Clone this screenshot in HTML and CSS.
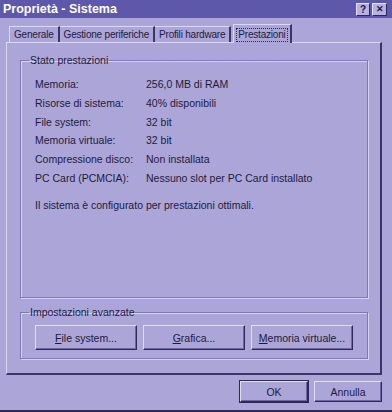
FILE: index.html
```html
<!DOCTYPE html>
<html lang="it">
<head>
<meta charset="UTF-8">
<title>Proprietà - Sistema</title>
<link rel="stylesheet" href="styles.css">
</head>
<body>
<div class="window">
    <div class="titlebar">
        <span class="title">Proprietà - Sistema</span>
        <span class="tbtn">?</span>
        <span class="tbtn x">&#x2715;</span>
    </div>
    <div class="tabs">
        <div class="tab first">Generale</div>
        <div class="tab">Gestione periferiche</div>
        <div class="tab">Profili hardware</div>
        <div class="tab active"><span class="focus">Prestazioni</span></div>
    </div>
    <div class="panel">
        <fieldset class="group stato">
            <legend>Stato prestazioni</legend>
            <div class="row"><span class="lbl">Memoria:</span><span>256,0 MB di RAM</span></div>
            <div class="row"><span class="lbl">Risorse di sistema:</span><span>40% disponibili</span></div>
            <div class="row"><span class="lbl">File system:</span><span>32 bit</span></div>
            <div class="row"><span class="lbl">Memoria virtuale:</span><span>32 bit</span></div>
            <div class="row"><span class="lbl">Compressione disco:</span><span>Non installata</span></div>
            <div class="row"><span class="lbl">PC Card (PCMCIA):</span><span>Nessuno slot per PC Card installato</span></div>
            <p class="msg">Il sistema è configurato per prestazioni ottimali.</p>
        </fieldset>
        <fieldset class="group avanzate">
            <legend>Impostazioni avanzate</legend>
            <div class="btnrow">
                <button class="btn"><u>F</u>ile system...</button>
                <button class="btn"><u>G</u>rafica...</button>
                <button class="btn"><u>M</u>emoria virtuale...</button>
            </div>
        </fieldset>
    </div>
    <div class="footer">
        <button class="btn ok">OK</button>
        <button class="btn">Annulla</button>
    </div>
</div>
</body>
</html>
```
FILE: styles.css
```css
body{
    margin: 0;
}
body *{
    font-family: "Liberation Sans", Arial, sans-serif;
}
.window{
    width: 392px;
    height: 412px;
    box-sizing: border-box;
    background-color: #aca6d8;
    border-bottom: 2px solid #2c2a55;
    color: #1c1a3c;
    font-size: 10.5px;
}
.titlebar{
    height: 18px;
    background-color: #5d58a9;
    display: flex;
    align-items: center;
    padding: 0 5px 0 3px;
    gap: 2px;
}
.title{
    flex: 1;
    color: white;
    font-weight: bold;
    font-size: 12.5px;
}
.tbtn{
    width: 14px;
    height: 13px;
    box-sizing: border-box;
    background-color: #b7b1e0;
    border: 1px solid;
    border-color: #e4e1f6 #2c2a55 #2c2a55 #e4e1f6;
    font-weight: bold;
    font-size: 10px;
    line-height: 11px;
    text-align: center;
    color: #1c1a3c;
}
.tbtn.x{
    width: 15px;
    font-size: 9px;
}
.tabs{
    display: flex;
    align-items: flex-end;
    height: 19px;
    margin-top: 5px;
    padding-left: 9px;
}
.tab{
    height: 16px;
    line-height: 15px;
    padding: 0 4px;
    font-size: 10px;
    letter-spacing: -0.2px;
    border-top: 1px solid #dcd8f3;
    border-right: 2px solid #3a3768;
    box-sizing: border-box;
}
.tab.first{
    border-left: 1px solid #dcd8f3;
}
.tab.active{
    height: 19px;
    margin-left: 2px;
    padding: 2px 2px 0 2px;
    border-left: 1px solid #dcd8f3;
    position: relative;
    top: 1px;
    background-color: #aca6d8;
}
.tab.active .focus{
    border: 1px dotted #2c2a55;
    padding: 0 1px;
    line-height: 12px;
    display: inline-block;
}
.panel{
    margin: 0 10px 0 6px;
    height: 333px;
    box-sizing: border-box;
    border-left: 1px solid #dcd8f3;
    border-top: 1px solid #dcd8f3;
    border-right: 2px solid #3a3768;
    border-bottom: 2px solid #3a3768;
    padding: 11px 12px 0 13px;
}
.group{
    box-sizing: border-box;
    margin: 0;
    border: 1px solid #7e78b8;
    box-shadow: inset 1px 1px 0 #d6d2f1, 1px 1px 0 #d6d2f1;
    padding: 0 0 0 14px;
}
.group legend{
    padding: 0 1px;
    margin-left: -6px;
}
.stato{
    height: 244px;
    padding-top: 9px;
}
.row{
    display: flex;
    height: 18.8px;
    line-height: 18.8px;
}
.lbl{
    width: 111px;
}
.msg{
    margin: 11px 0 0 0;
}
.avanzate{
    margin-top: 8px;
    height: 53px;
    padding: 7px 0 0 14px;
}
.btnrow{
    display: flex;
    gap: 6px;
}
.btn{
    height: 25px;
    width: 102px;
    font-size: 10.5px;
    color: #1c1a3c;
    background-color: #aca6d8;
    border: 1px solid;
    border-color: #e0ddf5 #2c2a55 #2c2a55 #e0ddf5;
    box-shadow: inset -1px -1px 0 #6e68a8;
    padding: 0;
}
.footer{
    display: flex;
    justify-content: flex-end;
    gap: 6px;
    padding: 6px 10px 0 0;
}
.footer .btn{
    width: 68px;
    height: 21px;
}
.footer .ok{
    outline: 1px solid #2c2a55;
}
```
